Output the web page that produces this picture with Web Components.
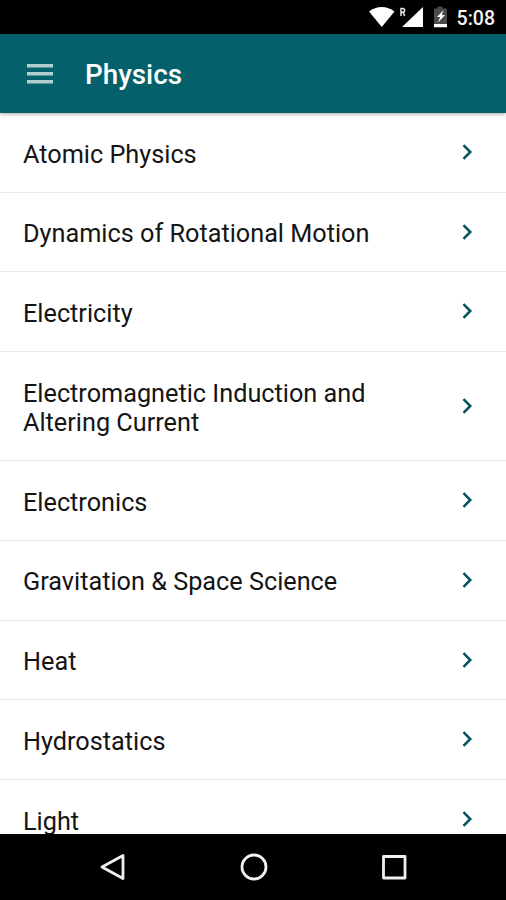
<!DOCTYPE html>
<html lang="en">
<head>
<meta charset="utf-8">
<meta name="viewport" content="width=device-width, initial-scale=1">
<title>Physics</title>
<style>
  html, body {
    margin: 0;
    height: 100%;
    overflow: hidden;
    background: #fff;
  }
</style>
</head>
<body>
<physics-app></physics-app>

<script>
  class StatusBar extends HTMLElement {
    constructor() {
      super();
      this.attachShadow({ mode: 'open' });
    }

    connectedCallback() {
      this.shadowRoot.innerHTML = `
        <style>
          :host {
            display: flex;
            flex: none;
            justify-content: flex-end;
            align-items: center;
            height: 34px;
            padding-right: 11px;
            box-sizing: border-box;
            background: #000;
            color: #f4f4f4;
          }
          svg {
            display: block;
            margin-right: 8px;
          }
          time {
            font-size: 19.500px;
            font-weight: 500;
            line-height: 34px;
            padding-top: 3px;
          }
        </style>
        <svg width="80" height="34" viewBox="0 0 80 34">
          <path fill="#fff" d="M0 11.5C7.500 5.500 18 5.500 25.500 11.500L12.750 27Z"/>
          <path fill="none" stroke="#e8e8e8" stroke-width="1.500" d="M32 16V8.600h1.800a1.800 1.800 0 0 1 0 3.600h-1.800M33.800 12.200l1.900 3.800"/>
          <path fill="#fff" d="M54 7v20H33z"/>
          <path fill="#4a4a4a" d="M68.500 6.500h5v2H78V27H65V8.500h3.500z"/>
          <path fill="#fff" d="M65 24h13v3.300H65zM74.500 10l-6.500 7h3.200L69 22.500l7-7.500h-3.300z"/>
        </svg>
        <time>${this.getAttribute('time') || '0:00'}</time>
      `;
    }
  }

  class AppToolbar extends HTMLElement {
    constructor() {
      super();
      this.attachShadow({ mode: 'open' });
    }

    connectedCallback() {
      this.shadowRoot.innerHTML = `
        <style>
          :host {
            display: flex;
            flex: none;
            align-items: center;
            height: 79px;
            padding-left: 27px;
            box-sizing: border-box;
            background: #04616b;
            box-shadow: 0 1px 4px rgba(0, 0, 0, 0.35);
            color: #fff;
            position: relative;
            z-index: 1;
          }
          svg {
            display: block;
            margin-right: 32px;
          }
          h1 {
            margin: 0;
            padding-top: 3px;
            font-size: 27.800px;
            font-weight: 500;
            line-height: 32px;
          }
        </style>
        <svg width="26" height="20" viewBox="0 0 26 20" fill="#b0cdd0">
          <path d="M0 0h26v3.500H0zM0 8h26v3.500H0zM0 16h26v3.500H0z"/>
        </svg>
        <h1><slot></slot></h1>
      `;
    }
  }

  class TopicRow extends HTMLElement {
    constructor() {
      super();
      this.attachShadow({ mode: 'open' });
    }

    connectedCallback() {
      this.shadowRoot.innerHTML = `
        <style>
          :host {
            display: flex;
            flex: none;
            align-items: center;
            padding: 26.500px 32px 22.800px 23px;
            border-bottom: 1px solid #ebebeb;
            font-size: 25.250px;
            line-height: 29.400px;
            color: #151515;
          }
          span {
            flex: 1;
            padding-right: 70px;
          }
          svg {
            display: block;
            flex: none;
            margin-top: -4.300px;
          }
        </style>
        <span><slot></slot></span>
        <svg width="12" height="18" viewBox="0 0 12 18">
          <path d="M1.500 2.200L8.300 9l-6.800 6.800" fill="none" stroke="#07525f" stroke-width="2.500"/>
        </svg>
      `;
    }
  }

  class NavBar extends HTMLElement {
    constructor() {
      super();
      this.attachShadow({ mode: 'open' });
    }

    connectedCallback() {
      this.shadowRoot.innerHTML = `
        <style>
          :host {
            display: flex;
            flex: none;
            justify-content: center;
            align-items: center;
            gap: 112.500px;
            height: 66px;
            padding-left: 1px;
            background: #000;
          }
          svg {
            display: block;
            fill: none;
            stroke: #f0f0f0;
            stroke-width: 2.800;
            stroke-linejoin: round;
          }
        </style>
        <svg width="28" height="28" viewBox="0 0 28 28"><path d="M3 14L24 2.500v23z"/></svg>
        <svg width="28" height="28" viewBox="0 0 28 28"><circle cx="14" cy="14" r="12"/></svg>
        <svg width="28" height="28" viewBox="0 0 28 28"><path d="M3.500 3.500h21.500v21.500h-21.500z"/></svg>
      `;
    }
  }

  class PhysicsApp extends HTMLElement {
    constructor() {
      super();
      this.attachShadow({ mode: 'open' });
    }

    connectedCallback() {
      const topics = [
        'Atomic Physics',
        'Dynamics of Rotational Motion',
        'Electricity',
        'Electromagnetic Induction and Altering Current',
        'Electronics',
        'Gravitation &amp; Space Science',
        'Heat',
        'Hydrostatics',
        'Light'
      ];

      this.shadowRoot.innerHTML = `
        <style>
          :host {
            display: flex;
            flex-direction: column;
            height: 100vh;
            font-family: Roboto, "Liberation Sans", sans-serif;
          }
          main {
            display: flex;
            flex-direction: column;
            flex: 1;
            min-height: 0;
            overflow: hidden;
            background: #fff;
          }
        </style>
        <status-bar time="5:08"></status-bar>
        <app-toolbar>Physics</app-toolbar>
        <main>
          ${topics.map(topic => `<topic-row>${topic}</topic-row>`).join('')}
        </main>
        <nav-bar></nav-bar>
      `;
    }
  }

  customElements.define('status-bar', StatusBar);
  customElements.define('app-toolbar', AppToolbar);
  customElements.define('topic-row', TopicRow);
  customElements.define('nav-bar', NavBar);
  customElements.define('physics-app', PhysicsApp);
</script>
</body>
</html>
